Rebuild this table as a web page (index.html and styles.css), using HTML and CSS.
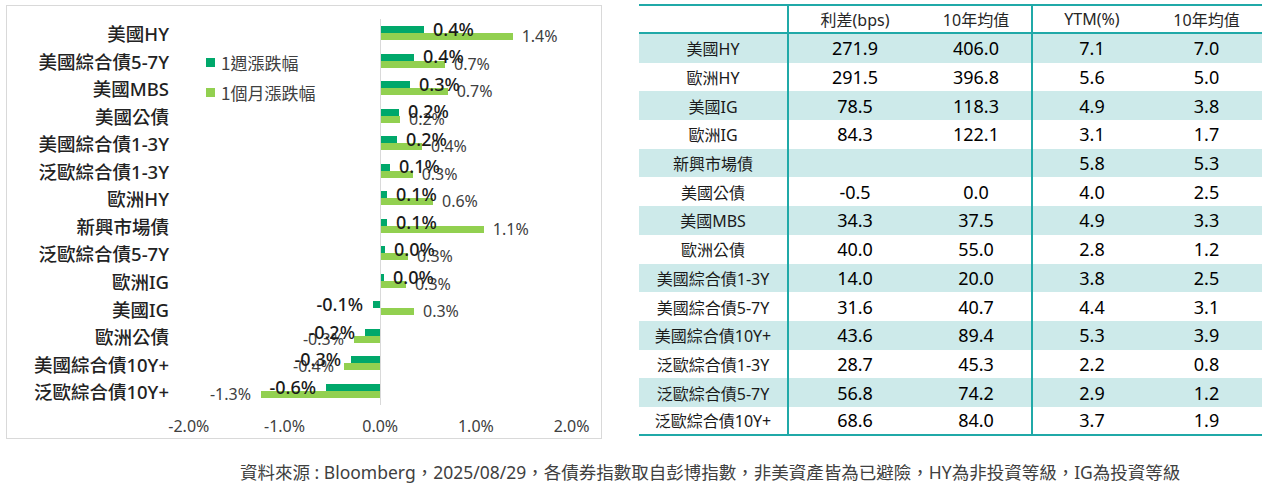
FILE: index.html
```html
<!DOCTYPE html>
<html lang="zh-Hant">
<head>
<meta charset="utf-8">
<title>債券指數漲跌幅與利差</title>
<link rel="stylesheet" href="styles.css">
</head>
<body>
<div class="page">
  <div class="top">
    <section class="chart">
      <div class="legend">
        <div class="leg-item"><span class="sw wk"></span>1週漲跌幅</div>
        <div class="leg-item"><span class="sw mo"></span>1個月漲跌幅</div>
      </div>
      <div class="rows">
        <div class="row"><div class="cat">美國HY</div><div class="plot">
          <span class="bar wk" style="--v:.455"></span><span class="bar mo" style="--v:1.381"></span>
          <span class="val wk" style="--v:.455">0.4%</span><span class="val mo" style="--v:1.381">1.4%</span></div></div>
        <div class="row"><div class="cat">美國綜合債5-7Y</div><div class="plot">
          <span class="bar wk" style="--v:.35"></span><span class="bar mo" style="--v:.674"></span>
          <span class="val wk" style="--v:.35">0.4%</span><span class="val mo" style="--v:.674">0.7%</span></div></div>
        <div class="row"><div class="cat">美國MBS</div><div class="plot">
          <span class="bar wk" style="--v:.308"></span><span class="bar mo" style="--v:.702"></span>
          <span class="val wk" style="--v:.308">0.3%</span><span class="val mo" style="--v:.702">0.7%</span></div></div>
        <div class="row"><div class="cat">美國公債</div><div class="plot">
          <span class="bar wk" style="--v:.193"></span><span class="bar mo" style="--v:.204"></span>
          <span class="val wk" style="--v:.193">0.2%</span><span class="val mo" style="--v:.204">0.2%</span></div></div>
        <div class="row"><div class="cat">美國綜合債1-3Y</div><div class="plot">
          <span class="bar wk" style="--v:.172"></span><span class="bar mo" style="--v:.434"></span>
          <span class="val wk" style="--v:.172">0.2%</span><span class="val mo" style="--v:.434">0.4%</span></div></div>
        <div class="row"><div class="cat">泛歐綜合債1-3Y</div><div class="plot">
          <span class="bar wk" style="--v:.099"></span><span class="bar mo" style="--v:.336"></span>
          <span class="val wk" style="--v:.099">0.1%</span><span class="val mo" style="--v:.336">0.3%</span></div></div>
        <div class="row"><div class="cat">歐洲HY</div><div class="plot">
          <span class="bar wk" style="--v:.068"></span><span class="bar mo" style="--v:.549"></span>
          <span class="val wk" style="--v:.068">0.1%</span><span class="val mo" style="--v:.549">0.6%</span></div></div>
        <div class="row"><div class="cat">新興市場債</div><div class="plot">
          <span class="bar wk" style="--v:.068"></span><span class="bar mo" style="--v:1.08"></span>
          <span class="val wk" style="--v:.068">0.1%</span><span class="val mo" style="--v:1.08">1.1%</span></div></div>
        <div class="row"><div class="cat">泛歐綜合債5-7Y</div><div class="plot">
          <span class="bar wk" style="--v:.047"></span><span class="bar mo" style="--v:.287"></span>
          <span class="val wk" style="--v:.047">0.0%</span><span class="val mo" style="--v:.287">0.3%</span></div></div>
        <div class="row"><div class="cat">歐洲IG</div><div class="plot">
          <span class="bar wk" style="--v:.037"></span><span class="bar mo" style="--v:.266"></span>
          <span class="val wk" style="--v:.037">0.0%</span><span class="val mo" style="--v:.266">0.3%</span></div></div>
        <div class="row"><div class="cat">美國IG</div><div class="plot">
          <span class="bar wk" style="--v:-.078"></span><span class="bar mo" style="--v:.35"></span>
          <span class="val wk neg" style="--v:-.078">-0.1%</span><span class="val mo" style="--v:.35">0.3%</span></div></div>
        <div class="row"><div class="cat">歐洲公債</div><div class="plot">
          <span class="bar wk" style="--v:-.162"></span><span class="bar mo" style="--v:-.277"></span>
          <span class="val wk neg" style="--v:-.162">-0.2%</span><span class="val mo neg" style="--v:-.277">-0.3%</span></div></div>
        <div class="row"><div class="cat">美國綜合債10Y+</div><div class="plot">
          <span class="bar wk" style="--v:-.308"></span><span class="bar mo" style="--v:-.381"></span>
          <span class="val wk neg" style="--v:-.308">-0.3%</span><span class="val mo neg" style="--v:-.381">-0.4%</span></div></div>
        <div class="row"><div class="cat">泛歐綜合債10Y+</div><div class="plot">
          <span class="bar wk" style="--v:-.569"></span><span class="bar mo" style="--v:-1.249"></span>
          <span class="val wk neg" style="--v:-.569">-0.6%</span><span class="val mo neg" style="--v:-1.249">-1.3%</span></div></div>
      </div>
      <div class="ticks">
        <span>-2.0%</span><span>-1.0%</span><span>0.0%</span><span>1.0%</span><span>2.0%</span>
      </div>
    </section>

    <table class="spread">
      <colgroup>
        <col class="c1"><col class="c2"><col class="c3"><col class="c4"><col class="c5">
      </colgroup>
      <thead>
        <tr><th></th><th class="sep">利差(bps)</th><th>10年均值</th><th class="sep">YTM(%)</th><th>10年均值</th></tr>
      </thead>
      <tbody>
        <tr><td class="name">美國HY</td><td class="sep">271.9</td><td>406.0</td><td class="sep">7.1</td><td>7.0</td></tr>
        <tr><td class="name">歐洲HY</td><td class="sep">291.5</td><td>396.8</td><td class="sep">5.6</td><td>5.0</td></tr>
        <tr><td class="name">美國IG</td><td class="sep">78.5</td><td>118.3</td><td class="sep">4.9</td><td>3.8</td></tr>
        <tr><td class="name">歐洲IG</td><td class="sep">84.3</td><td>122.1</td><td class="sep">3.1</td><td>1.7</td></tr>
        <tr><td class="name">新興市場債</td><td class="sep"></td><td></td><td class="sep">5.8</td><td>5.3</td></tr>
        <tr><td class="name">美國公債</td><td class="sep">-0.5</td><td>0.0</td><td class="sep">4.0</td><td>2.5</td></tr>
        <tr><td class="name">美國MBS</td><td class="sep">34.3</td><td>37.5</td><td class="sep">4.9</td><td>3.3</td></tr>
        <tr><td class="name">歐洲公債</td><td class="sep">40.0</td><td>55.0</td><td class="sep">2.8</td><td>1.2</td></tr>
        <tr><td class="name">美國綜合債1-3Y</td><td class="sep">14.0</td><td>20.0</td><td class="sep">3.8</td><td>2.5</td></tr>
        <tr><td class="name">美國綜合債5-7Y</td><td class="sep">31.6</td><td>40.7</td><td class="sep">4.4</td><td>3.1</td></tr>
        <tr><td class="name">美國綜合債10Y+</td><td class="sep">43.6</td><td>89.4</td><td class="sep">5.3</td><td>3.9</td></tr>
        <tr><td class="name">泛歐綜合債1-3Y</td><td class="sep">28.7</td><td>45.3</td><td class="sep">2.2</td><td>0.8</td></tr>
        <tr><td class="name">泛歐綜合債5-7Y</td><td class="sep">56.8</td><td>74.2</td><td class="sep">2.9</td><td>1.2</td></tr>
        <tr><td class="name">泛歐綜合債10Y+</td><td class="sep">68.6</td><td>84.0</td><td class="sep">3.7</td><td>1.9</td></tr>
      </tbody>
    </table>
  </div>
  <p class="source">資料來源 : Bloomberg，2025/08/29，各債券指數取自彭博指數，非美資產皆為已避險，HY為非投資等級，IG為投資等級</p>
</div>
</body>
</html>
```

FILE: styles.css
```css
* { box-sizing: border-box; }

body {
  margin: 0;
  background: #ffffff;
  font-family: "Noto Sans", "Noto Sans CJK TC", sans-serif;
  color: #262626;
}

.page {
  width: 1266px;
  height: 484px;
  display: flex;
  flex-direction: column;
}

.top {
  display: flex;
  align-items: flex-start;
}

/* ---------- Chart ---------- */
.chart {
  position: relative;
  width: 596px;
  height: 434px;
  margin: 5px 0 0 6px;
  padding-top: 13.2px;
  border: 1px solid #d9d9d9;
}

.legend {
  position: absolute;
  left: 199px;
  top: 46px;
  display: flex;
  flex-direction: column;
  gap: 10px;
}

.leg-item {
  display: flex;
  align-items: center;
  gap: 6px;
  height: 20px;
  font-size: 17px;
  color: #404040;
  font-family: "Noto Sans CJK TC", sans-serif;
}

.sw {
  width: 9px;
  height: 9px;
  margin-top: 1px;
}
.sw.wk { background: #00a86b; }
.sw.mo { background: #92d050; }

.row {
  display: flex;
  height: 27.54px;
}

.cat {
  width: 162px;
  text-align: right;
  font-size: 18.5px;
  font-weight: 500;
  line-height: 29px;
  white-space: nowrap;
  color: #222;
}

.plot {
  position: relative;
  margin-left: 20px;
  width: 383px;
}

.plot::before {
  content: "";
  position: absolute;
  left: 191px;
  top: 0;
  bottom: 0;
  width: 1px;
  background: #d9d9d9;
}

.bar {
  position: absolute;
  height: 7px;
  left: calc(191.5px + min(var(--v), 0) * 95.7px);
  width: calc(max(var(--v), -1 * var(--v)) * 95.7px);
}
.bar.wk { top: 6.8px; background: #00a86b; }
.bar.mo { top: 13.8px; background: #92d050; }

.val {
  position: absolute;
  line-height: 1;
  white-space: nowrap;
  left: calc(191.5px + var(--v) * 95.7px + 9px);
  transform: translateY(-50%);
}
.val.neg {
  left: calc(191.5px + var(--v) * 95.7px - 10px);
  transform: translate(-100%, -50%);
}
.val.wk {
  top: 9.6px;
  font-size: 18px;
  font-weight: 500;
  color: #1a1a1a;
  z-index: 2;
}
.val.mo {
  top: 16.8px;
  font-size: 16px;
  color: #404040;
  z-index: 1;
}

.ticks {
  display: grid;
  grid-template-columns: repeat(5, 95.7px);
  margin: 11px 0 0 134px;
  font-size: 16px;
  line-height: 20px;
  color: #404040;
}
.ticks span { text-align: center; }

/* ---------- Table ---------- */
.spread {
  margin: 4px 0 0 37px;
  width: 623px;
  border-collapse: separate;
  border-spacing: 0;
  table-layout: fixed;
  font-family: "Noto Sans", "Noto Sans CJK TC", sans-serif;
  color: #000;
}

.c1 { width: 148px; }
.c2 { width: 134px; }
.c3 { width: 110px; }
.c4 { width: 120px; }
.c5 { width: 111px; }

.spread th,
.spread td {
  padding: 0;
  text-align: center;
  white-space: nowrap;
}

.spread th {
  height: 30px;
  font-weight: 400;
  font-size: 16px;
  color: #262626;
  border-top: 2px solid #20a9a8;
  border-bottom: 2px solid #20a9a8;
}

.spread td {
  height: 28.7px;
  font-size: 18px;
}

.spread td.name { font-size: 16px; color: #1a1a1a; }

.spread .sep { border-left: 2px solid #20a9a8; }

.spread tbody tr:nth-child(odd) td { background: #cdeaea; }

.spread tbody tr:last-child td { border-bottom: 2px solid #20a9a8; }

/* ---------- Footer ---------- */
.source {
  margin: 23px 0 0 240px;
  font-size: 17.5px;
  line-height: 20px;
  color: #404040;
  white-space: nowrap;
  font-family: "Noto Sans", "Noto Sans CJK TC", sans-serif;
}
```
